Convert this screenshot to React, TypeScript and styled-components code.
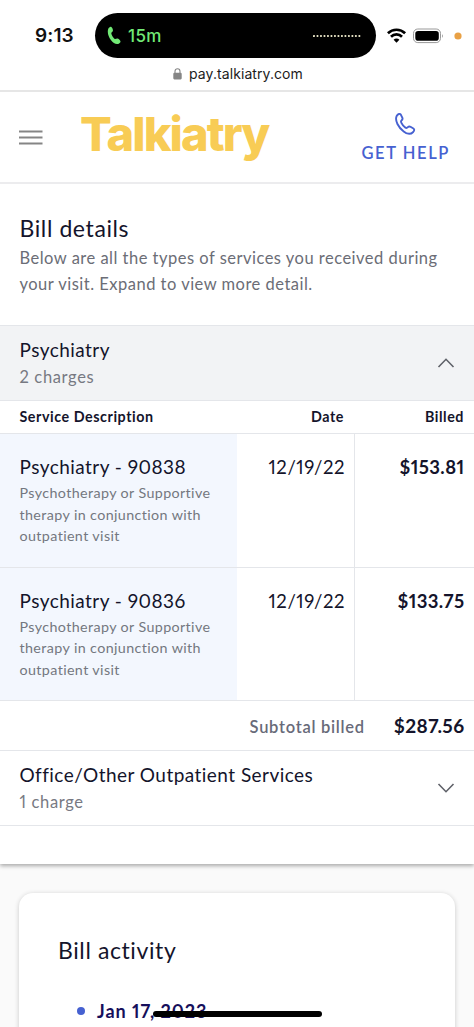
import React from 'react';
import styled, { createGlobalStyle } from 'styled-components';

const GlobalStyle = createGlobalStyle`
  * { box-sizing: border-box; }
  body { margin: 0; background: #fff; overflow: hidden; }
`;

const ink = '#14142b';
const muted = '#6b6d76';
const line = '#e4e6ea';
const blue = '#4661d1';

const Screen = styled.main`
  position: relative;
  width: 474px;
  height: 1027px;
  overflow: hidden;
  background: #fafafa;
  color: ${ink};
  font-family: Lato, 'Liberation Sans', sans-serif;
  font-variant-numeric: proportional-nums;
  white-space: nowrap;
`;

const StatusBar = styled.div`
  display: flex;
  align-items: center;
  height: 71px;
  background: #fff;
  font-family: Inter, sans-serif;
`;

const Clock = styled.time`
  width: 95px;
  padding-left: 35px;
  color: #111;
  font-size: 19px;
  font-weight: 600;
  letter-spacing: 0.1px;
`;

const Island = styled.div`
  display: flex;
  align-items: center;
  width: 281px;
  height: 45px;
  padding: 0 15px 0 12px;
  border-radius: 23px;
  background: #000;
  color: #72ea76;
  font-size: 17px;
  font-weight: 500;
`;

const CallTime = styled.span`
  flex: 1;
  padding-left: 7px;
  letter-spacing: 0.4px;
`;

const StatusIcons = styled.div`
  display: flex;
  align-items: center;
  padding-left: 11px;
`;

const AddressBar = styled.div`
  display: flex;
  justify-content: center;
  gap: 7px;
  height: 21px;
  padding-left: 2px;
  border-bottom: 2px solid #e6e6e6;
  background: #fff;
  color: #1c1c1c;
  font-family: Inter, sans-serif;
  font-size: 14px;
  line-height: 6px;
  letter-spacing: 0.08px;
`;

const LockIcon = styled.svg`
  margin-top: -3px;
`;

const Header = styled.header`
  position: relative;
  display: flex;
  height: 92px;
  padding: 0 25px 0 19px;
  border-bottom: 2px solid #ececee;
  background: #fff;
`;

const MenuIcon = styled.svg`
  margin-top: 37px;
`;

const Logo = styled.div`
  flex: 1;
  padding: 12px 0 0 37px;
  color: #f8cc55;
  font-family: Inter, sans-serif;
  font-size: 47px;
  font-weight: 800;
  line-height: 60px;
  letter-spacing: -1.9px;
`;

const Help = styled.a`
  display: flex;
  flex-direction: column;
  align-items: center;
  padding-top: 20px;
  color: ${blue};
  font-size: 16.5px;
  font-weight: 600;
  line-height: 20px;
  letter-spacing: 1.6px;
`;

const HelpLabel = styled.span`
  margin: 6px -1px 0 0;
`;

const Details = styled.section`
  height: 680px;
  background: #fff;
  box-shadow: 0 2px 4px rgba(0, 0, 0, 0.32);
`;

const Intro = styled.div`
  height: 141px;
  padding: 29px 19px 0 19.5px;
`;

const Title = styled.h2`
  margin: 0;
  font-size: 23px;
  font-weight: 400;
  line-height: 30px;
  letter-spacing: 0.6px;
`;

const Lead = styled.p`
  margin: 3px 0 0;
  color: ${muted};
  font-size: 16.5px;
  line-height: 25.5px;
  letter-spacing: 0.49px;
`;

const Group = styled.div<{ $open?: boolean }>`
  display: flex;
  align-items: center;
  justify-content: space-between;
  height: ${p => (p.$open ? 76 : 75)}px;
  padding: 0 19px 0 19.5px;
  border: solid ${line};
  border-width: ${p => (p.$open ? '1px 0' : '0 0 1px')};
  background: ${p => (p.$open ? '#f2f3f5' : '#fff')};
`;

const GroupName = styled.div`
  font-size: 19px;
  line-height: 26px;
  letter-spacing: 0.46px;
`;

const GroupCount = styled.div`
  padding-top: 2px;
  color: #777982;
  font-size: 16.5px;
  line-height: 24px;
  letter-spacing: 0.65px;
`;

const columns = '237px 118px 1fr';

const TableHead = styled.div`
  display: grid;
  grid-template-columns: ${columns};
  height: 33px;
  border-bottom: 1px solid ${line};
  font-size: 14.3px;
  font-weight: 700;
  line-height: 32px;
  letter-spacing: 0.55px;
`;

const HeadCell = styled.span<{ $end?: boolean }>`
  padding: 0 ${p => (p.$end ? 10 : 0)}px 0 19.5px;
  text-align: ${p => (p.$end ? 'right' : 'left')};

  &:nth-child(2) {
    padding-right: 11px;
  }
`;

const Charge = styled.div`
  display: grid;
  grid-template-columns: ${columns};
  height: 133.5px;
  border-bottom: 1px solid ${line};
`;

const Service = styled.div`
  padding: 20px 0 0 19.5px;
  background: #f3f7fe;
`;

const ServiceText = styled.div`
  padding-top: 2px;
  color: #747780;
  font-size: 14.3px;
  line-height: 21.7px;
  letter-spacing: 0.38px;
`;

const DateCell = styled.div`
  padding: 20px 9px 0 0;
  border-right: 1px solid ${line};
  font-size: 18.5px;
  line-height: 26px;
  letter-spacing: 0.55px;
  text-align: right;
`;

const Amount = styled.div`
  padding: 20px 9.5px 0 0;
  font-size: 18.5px;
  font-weight: 700;
  line-height: 26px;
  letter-spacing: 0.4px;
  text-align: right;
`;

const Subtotal = styled.div`
  display: flex;
  justify-content: flex-end;
  gap: 29px;
  height: 50px;
  padding: 12px 9.5px 0 0;
  border-bottom: 1px solid ${line};
  font-size: 19px;
  font-weight: 700;
  line-height: 25px;
  letter-spacing: 0.4px;
`;

const SubtotalLabel = styled.span`
  padding-top: 2px;
  color: #686a79;
  font-size: 16.5px;
  font-weight: 600;
  letter-spacing: 0.72px;
`;

const Activity = styled.section`
  height: 160px;
  margin: 29px 19px 0;
  padding: 42px 39px 0;
  border-radius: 14px;
  background: #fff;
  box-shadow: 0 1px 5px rgba(0, 0, 0, 0.2);
`;

const Event = styled.div`
  display: flex;
  align-items: center;
  gap: 12px;
  padding: 33px 0 0 19px;
  color: #160f5b;
  font-size: 18px;
  font-weight: 700;
  line-height: 26px;
  letter-spacing: 1px;
`;

const Dot = styled.i`
  width: 8px;
  height: 8px;
  border-radius: 50%;
  background: ${blue};
`;

const HomeIndicator = styled.div`
  position: absolute;
  left: 153px;
  top: 1011px;
  width: 169px;
  height: 6px;
  border-radius: 3px;
  background: #000;
`;

const Chevron = ({ up }: { up?: boolean }) => (
  <svg width="18" height="12" viewBox="0 0 18 12" fill="none" stroke="#5e6068" strokeWidth="1.6">
    <path d={up ? 'M1.5 10 9 2.3 16.5 10' : 'M1.5 2 9 9.7 16.5 2'} />
  </svg>
);

const charges = [
  { code: '90838', date: '12/19/22', amount: '$153.81' },
  { code: '90836', date: '12/19/22', amount: '$133.75' },
];

export default function App() {
  return (
    <Screen>
      <GlobalStyle />
      <StatusBar>
        <Clock>9:13</Clock>
        <Island>
          <svg width="14" height="19" viewBox="0 0 14 19" fill="#72ea76">
            <path d="M1.2 3.1C2 1.4 3.4.3 4.4 1.1c1 .8 1.7 2.9 1.5 3.9-.2.9-1.5 1.2-1.6 2.2-.1 1.3 1.9 4.8 3.4 5.8.9.5 1.7-.7 2.7-.5 1.1.2 2.9 1.7 3.1 2.7.2 1.3-1.7 2.9-3.5 2.9C5.5 18.1-.9 9.2 1.2 3.1Z" />
          </svg>
          <CallTime>15m</CallTime>
          <svg width="48" height="4" viewBox="0 0 48 4">
            <path d="M1 2H47" stroke="#f3efcf" strokeWidth="2.1" strokeLinecap="round" strokeDasharray="0.01 3.48" />
          </svg>
        </Island>
        <StatusIcons>
          <svg width="67" height="18" viewBox="0 0 67 18" fill="none">
            <g stroke="#000" strokeWidth="2.7">
              <path d="M.9 6.2a12.4 12.4 0 0 1 17.2 0" />
              <path d="M4 9.7a7.8 7.8 0 0 1 11 0" />
            </g>
            <path d="M6.6 12.7a4 4 0 0 1 5.800 0L9.5 15.8Z" fill="#000" />
            <rect x="26.5" y="2" width="27" height="13.6" rx="4.3" stroke="#999" />
            <rect x="28.3" y="3.9" width="23.5" height="9.8" rx="2.8" fill="#000" />
            <path d="M55 7q1.5 1.9 0 3.9Z" fill="#777" />
          </svg>
          <svg width="8" height="8" viewBox="0 0 8 8"><circle cx="4" cy="4" r="3.6" fill="#e9a145" /></svg>
        </StatusIcons>
      </StatusBar>
      <AddressBar>
        <LockIcon width="9" height="12" viewBox="0 0 9 12">
          <rect x=".3" y="4.8" width="8.4" height="6.6" rx="1.1" fill="#858585" />
          <path d="M2 5V3.2a2.5 2.5 0 0 1 5 0V5" fill="none" stroke="#858585" strokeWidth="1.1" />
        </LockIcon>
        pay.talkiatry.com
      </AddressBar>
      <Header>
        <MenuIcon width="24" height="17" viewBox="0 0 24 17">
          <path d="M0 2.5H23.5M0 8.5H23.5M0 14.5H23.5" stroke="#858585" strokeWidth="1.9" />
        </MenuIcon>
        <Logo>Talkiatry</Logo>
        <Help>
          <svg width="22" height="25" viewBox="0 0 22 24" fill="none" stroke={blue} strokeWidth="1.9" strokeLinejoin="round">
            <path d="M2.8 3.2C4 1.3 6 .9 6.8 2.1l1.6 3.3c.4 1 0 1.7-.7 2.4-.8.7-.9 1.5-.3 2.6.9 1.9 2.3 3.6 4 4.7 1 .6 1.8.3 2.5-.4.8-.8 1.7-.9 2.6-.4l2.9 1.7c1.2.8 1 2.1-.2 3.5-2.3 2.3-6 2.3-9.5-.6C4.700 15.200.3 8 2.800 3.200Z" />
          </svg>
          <HelpLabel>GET HELP</HelpLabel>
        </Help>
      </Header>
      <Details>
        <Intro>
          <Title>Bill details</Title>
          <Lead>
            Below are all the types of services you received during
            <br />
            your visit. Expand to view more detail.
          </Lead>
        </Intro>
        <Group $open>
          <div>
            <GroupName>Psychiatry</GroupName>
            <GroupCount>2 charges</GroupCount>
          </div>
          <Chevron up />
        </Group>
        <TableHead>
          <HeadCell>Service Description</HeadCell>
          <HeadCell $end>Date</HeadCell>
          <HeadCell $end>Billed</HeadCell>
        </TableHead>
        {charges.map(c => (
          <Charge key={c.code}>
            <Service>
              <GroupName>Psychiatry - {c.code}</GroupName>
              <ServiceText>
                Psychotherapy or Supportive
                <br />
                therapy in conjunction with
                <br />
                outpatient visit
              </ServiceText>
            </Service>
            <DateCell>{c.date}</DateCell>
            <Amount>{c.amount}</Amount>
          </Charge>
        ))}
        <Subtotal>
          <SubtotalLabel>Subtotal billed</SubtotalLabel>
          <span>$287.56</span>
        </Subtotal>
        <Group>
          <div>
            <GroupName>Office/Other Outpatient Services</GroupName>
            <GroupCount>1 charge</GroupCount>
          </div>
          <Chevron />
        </Group>
      </Details>
      <Activity>
        <Title>Bill activity</Title>
        <Event>
          <Dot />
          Jan 17, 2023
        </Event>
      </Activity>
      <HomeIndicator />
    </Screen>
  );
}
